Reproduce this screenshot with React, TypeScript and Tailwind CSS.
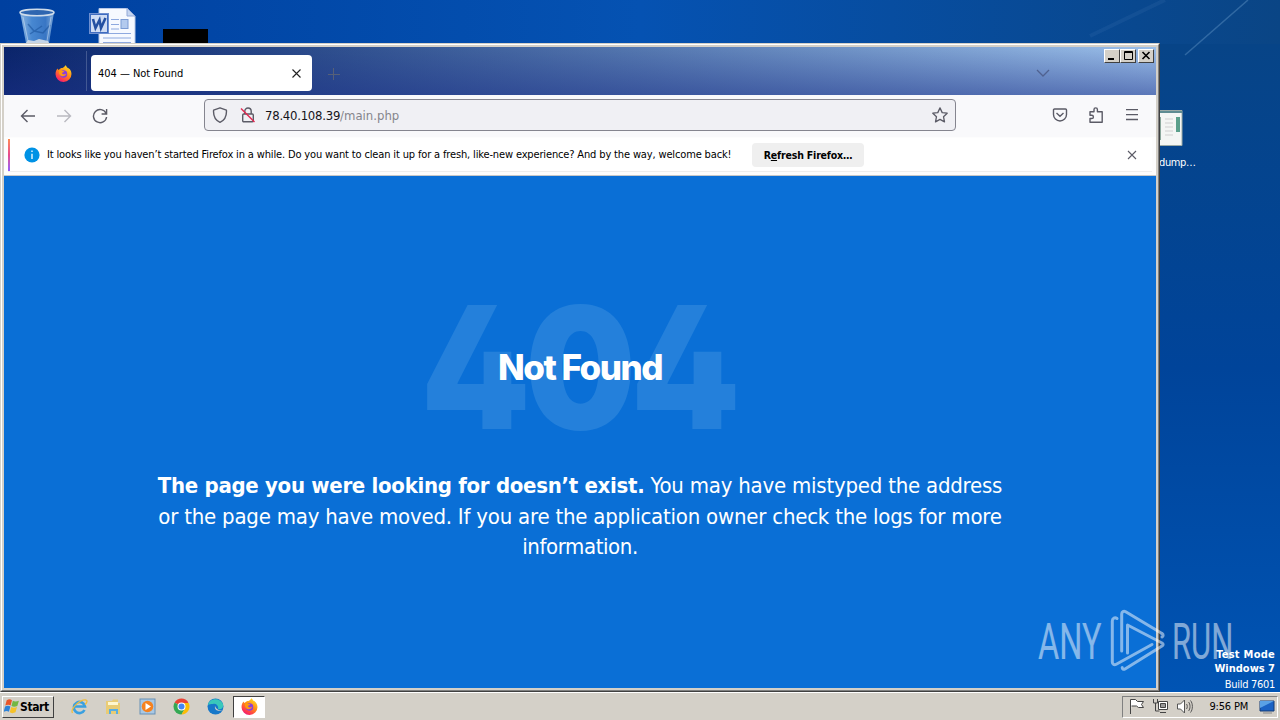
import React from "react";

const Firefox: React.FC<{ size: number; id: string }> = ({ size, id }) => (
  <svg width={size} height={size} viewBox="0 0 16 16">
    <defs>
      <linearGradient id={id} x1="0.8" y1="0" x2="0.2" y2="1">
        <stop offset="0" stopColor="#ffe226" />
        <stop offset="0.45" stopColor="#ff8a16" />
        <stop offset="0.8" stopColor="#ff3750" />
        <stop offset="1" stopColor="#e31587" />
      </linearGradient>
    </defs>
    <path
      d="M9.7 0.3c1 .7 1.500 1.600 1.900 2.400 1-.1 3.900 2 3.900 5.800a7.500 7.300 0 0 1-15 .2c0-2.500.8-4.200 2-5.300l.5 1.200 1.200-.6C5.300 3 6 2.800 7 2.900c1.200-.6 2.300-1.400 2.700-2.600z"
      fill={`url(#${id})`}
    />
    <circle cx="8" cy="8.500" r="3.500" fill="#8a3ce0" />
    <path d="M3.800 5.200c1.200-.8 2.300-.5 3.400.4l1.600.3c-.2 1-1.300 1-2.100 1.500-.3 1.500 2.600 2.300 4 .4-.4 3-4.400 3.800-6.100 1.600-1-1.300-1.100-2.700-.8-4.200z" fill="#ff980e" />
  </svg>
);

const RecycleBin: React.FC = () => (
  <svg width="36" height="36" viewBox="0 0 36 36">
    <defs>
      <linearGradient id="bin" x1="0" x2="1">
        <stop offset="0" stopColor="#9dc3e8" />
        <stop offset="0.35" stopColor="#4f8fd6" />
        <stop offset="0.75" stopColor="#3f7cc8" />
        <stop offset="1" stopColor="#8fb6e0" />
      </linearGradient>
    </defs>
    <path d="M1 4L7 35h23l5-31z" fill="url(#bin)" opacity="0.9" />
    <ellipse cx="18" cy="4.500" rx="17" ry="3.200" fill="#2f66b0" stroke="#cfdcea" strokeWidth="1.500" />
    <path d="M7 35l2-3 6 1 5-2 9 2 1 2z" fill="#d3dde8" opacity="0.9" />
    <path d="M9 16l6 7 9 2 7-8M11 26l12-8" stroke="#1d559f" strokeWidth="1.500" fill="none" opacity="0.6" />
    <path d="M4 9l5 24M32 9l-4 24" stroke="#dbe9f7" opacity="0.5" />
  </svg>
);

const WordFile: React.FC = () => (
  <svg width="48" height="36" viewBox="0 0 48 36">
    <path d="M10 .5h28l8 8V36H10z" fill="#f6f9ff" stroke="#b9c8e6" />
    <path d="M38 0v8h8z" fill="#c5d5f0" stroke="#93a9d8" />
    <path d="M22 11.500h8M22 16.500h8M22 21h8M14 25.500h28M14 30h28M14 34.500h28" stroke="#8ea9df" />
    <rect x="32" y="11.500" width="7" height="9" fill="#b3caee" stroke="#7b9bd4" />
    <rect x="0.500" y="5.500" width="19" height="20" fill="#3f6cc0" stroke="#6e8fd0" />
    <rect x="2" y="7" width="16" height="17" fill="#cfdcf4" />
    <path d="M4 11l2.500 9 4-8 1.500 8 4.500-10" fill="none" stroke="#2450a2" strokeWidth="2.600" />
  </svg>
);

const winButton =
  "flex items-center justify-center w-4 h-[14px] bg-[#d4d0c8] border border-t-white border-l-white border-r-[#404040] border-b-[#404040]";

const TitleBar: React.FC = () => (
  <div className="relative flex h-12 shrink-0 bg-gradient-to-r from-[#0a246a] to-[#9cc0ea]">
    <div className="absolute inset-0 bg-gradient-to-b from-transparent to-[#1c3088]/50" />
    <div className="relative flex w-full">
      <div className="flex w-[83px] items-center justify-end border-r border-[#6075a5]/60 pr-3.5 my-1 pt-1">
        <Firefox size={17} id="ffTitle" />
      </div>
      <div className="ml-1 mt-2 flex h-9 w-[221px] items-center justify-between rounded bg-white pl-[7px] pr-2.5 text-[11px] text-black">
        <span className="pt-[3px] tracking-[-0.03px] whitespace-nowrap">404 — Not Found</span>
        <svg width="11" height="11" viewBox="0 0 11 11" stroke="#222" strokeWidth="1.100">
          <path d="M1.500 1.500l8 8M9.500 1.500l-8 8" />
        </svg>
      </div>
      <svg className="ml-4 mt-[21px]" width="12" height="12" stroke="#566078" strokeWidth="1">
        <path d="M5.500 0v12M0 6.500h12" />
      </svg>
      <svg className="ml-auto mt-[22px] mr-[54px]" width="14" height="8" fill="none" stroke="#506290" strokeWidth="1.300">
        <path d="M1 1l6 6 6-6" />
      </svg>
      <div className="mt-0.5 mr-0.5 flex">
        <span className={winButton}>
          <svg width="12" height="10"><path d="M2 8h6" stroke="#000" strokeWidth="2" /></svg>
        </span>
        <span className={winButton}>
          <svg width="12" height="10"><path d="M2.500 .5h8v8h-8zM2 1.500h8" stroke="#000" fill="none" /></svg>
        </span>
        <span className={`${winButton} ml-0.5`}>
          <svg width="12" height="10"><path d="M2.500 1l7 7M9.500 1l-7 7" stroke="#000" strokeWidth="1.600" /></svg>
        </span>
      </div>
    </div>
  </div>
);

const Toolbar: React.FC = () => (
  <div className="flex h-[42px] shrink-0 items-start bg-[#f9f9fb] pt-1">
    <div className="flex h-8 items-center gap-5 pl-4 pt-px text-[#5b5b66]">
      <svg width="16" height="16" fill="none" stroke="#5b5b66" strokeWidth="1.400">
        <path d="M15 8H1.500M7.500 2L1.500 8l6 6" />
      </svg>
      <svg width="16" height="16" fill="none" stroke="#b9b9c0" strokeWidth="1.400">
        <path d="M1 8h13.500M8.500 2l6 6-6 6" />
      </svg>
      <svg width="16" height="16" fill="none" stroke="#5b5b66" strokeWidth="1.400">
        <path d="M14 5.200A6.600 6.600 0 1 0 14.600 9M14.600 1v5H9.600" />
      </svg>
    </div>
    <div className="ml-24 flex h-8 w-[752px] items-center rounded-[4px] border border-[#85858f] bg-[#f0f0f4] pl-[7px] pr-[7px]">
      <svg width="16" height="16" fill="none" stroke="#5b5b66" strokeWidth="1.400">
        <path d="M8 .8l6.400 2.400C14.800 8.500 13 13 8 15.300 3 13 1.200 8.500 1.600 3.200z" strokeLinejoin="round" />
      </svg>
      <svg className="ml-3" width="16" height="16" fill="none" stroke="#5b5b66" strokeWidth="1.400">
        <rect x="2.700" y="7" width="10.600" height="7.800" rx="1" />
        <path d="M4.800 7V4.200a3.200 3.200 0 0 1 6.400 0V7" />
        <path d="M1 1.500l13.500 13.500" stroke="#e22850" />
      </svg>
      <span className="ml-[9px] pt-px whitespace-nowrap text-[13px] tracking-[-0.25px] text-[#15141a]">
        78.40.108.39<span className="tracking-normal text-[#85858c]">/main.php</span>
      </span>
      <svg className="ml-auto" width="16" height="16" fill="none" stroke="#5b5b66" strokeWidth="1.300" strokeLinejoin="round">
        <path d="M8 .9l2.200 4.700 5 .6-3.700 3.500 1 5.200L8 12.400l-4.500 2.500 1-5.200L.8 6.200l5-.6z" />
      </svg>
    </div>
    <div className="ml-24 flex h-8 items-center gap-5">
      <svg width="16" height="16" fill="none" stroke="#5b5b66" strokeWidth="1.400">
        <path d="M2.500 2h11c.6 0 1 .4 1 1v4.500a6.500 6.500 0 0 1-13 0V3c0-.6.400-1 1-1zM4.500 6L8 9.300 11.500 6" />
      </svg>
      <svg width="16" height="16" fill="none" stroke="#5b5b66" strokeWidth="1.400">
        <path d="M2 15.200V11.500h1.800a1.500 1.500 0 0 0 0-3.200H2V4.700h4V2.600a1.700 1.700 0 0 1 3.400 0v2.100h4.800v10.500z" strokeLinejoin="round" />
      </svg>
      <svg width="16" height="16" stroke="#5b5b66" strokeWidth="1.300">
        <path d="M2 2.700h12M2 7.700h12M2 12.500h12" />
      </svg>
    </div>
  </div>
);

const Notice: React.FC = () => (
  <div className="h-[39px] shrink-0 border-b border-[#c8c8c8] bg-[#fdfdfd] px-1 pt-px">
    <div className="flex h-[34px] items-center border-b border-[#ededed] bg-white">
      <div className="h-8 w-0.5 bg-gradient-to-b from-[#ff8a50] via-[#e8488a] to-[#9059ff]" />
      <svg className="ml-3.5" width="16" height="16">
        <circle cx="8" cy="8" r="7.600" fill="#0092e5" />
        <path d="M8 3.500v1.600M8 6.800v5.200" stroke="#fff" strokeWidth="1.300" />
      </svg>
      <span className="ml-[7px] pt-0.5 whitespace-nowrap text-[11px] tracking-[-0.146px] text-black">
        It looks like you haven’t started Firefox in a while. Do you want to clean it up for a fresh, like-new experience? And by the way, welcome back!
      </span>
      <button className="ml-auto mr-[263px] h-6 w-28 whitespace-nowrap rounded-sm bg-[#efefef] pt-0.5 text-[10.500px] font-bold tracking-[-0.18px] text-black">
        R<u>e</u>fresh Firefox…
      </button>
      <svg className="mr-[15px]" width="10" height="10" stroke="#5b5b66" strokeWidth="1.100">
        <path d="M1 1l8 8M9 1L1 9" />
      </svg>
    </div>
  </div>
);

const ErrorPage: React.FC = () => (
  <div className="flex flex-1 flex-col items-center bg-[#0a6fd6] pt-[106px] text-white">
    <div className="grid h-[170px] place-items-center">
      <span className="col-start-1 row-start-1 -translate-x-0.5 scale-x-[0.92] font-['Inter'] text-[170px] font-black leading-none tracking-[-6px] text-[#2480db] [font-feature-settings:'cv02']">
        404
      </span>
      <h1 className="relative z-10 col-start-1 row-start-1 font-['Inter'] text-[35px] font-extrabold tracking-[-1.500px]">Not Found</h1>
    </div>
    <p className="mt-[19px] whitespace-nowrap text-center text-[22px] leading-[30.500px] tracking-[-0.22px]">
      <b className="tracking-[-0.3px]">The page you were looking for doesn’t exist.</b> You may have mistyped the address
      <br />
      or the page may have moved. If you are the application owner check the logs for more
      <br />
      <span className="tracking-[-0.4px]">information.</span>
    </p>
  </div>
);

const Watermark: React.FC = () => (
  <div className="absolute left-[1038px] top-[608px] flex h-16 w-[196px] items-center font-['Roboto'] text-[50px] text-white opacity-50">
    <span className="w-[66px] origin-left scale-x-[0.65] pt-1">ANY</span>
    <svg className="mx-1.5 shrink-0" width="56" height="64" fill="none" stroke="#fff" strokeWidth="3" strokeLinejoin="round" strokeLinecap="round">
      <path d="M7 10.500C5 9 2.300 10 2.300 13v41c0 2.500 2 3.300 4 2.200L42 36.500" />
      <path d="M11.700 43V6c0-2.500 2-3.300 4-2.200L52 25.500" />
      <path d="M17.500 45V17L52 35c1.500 1 1.500 2 0 3L15 61c-1.500.8-2.800 0-2.800-1.500" />
      <path d="M52 25.500c1.500 1 1.500 2.500 0 3.500" />
    </svg>
    <span className="w-[62px] origin-left scale-x-[0.62] pt-1">RUN</span>
  </div>
);

const Taskbar: React.FC = () => (
  <div className="flex h-7 shrink-0 items-center border-t border-white bg-[#d4d0c8] pl-0.5 text-[11px] text-black">
    <div className="flex h-[22px] w-[52px] items-center border border-t-white border-l-white border-r-[#404040] border-b-[#404040] pl-px font-bold">
      <svg width="16" height="17" viewBox="0 0 15 16">
        <path d="M2.500 2c2-1.200 3.500-1 5 0L6.200 7c-1.500-1-3-1-5 0z" fill="#e8562a" />
        <path d="M8.300 2.500c1.500 1 3.500 1 5.700 0l-1.500 5c-2 1-4 1-5.500 0z" fill="#74b743" />
        <path d="M1 8c2-1 3.500-1 5 0l-1.400 5c-1.500-1-3-1-5 0z" fill="#2c82d8" />
        <path d="M6.800 8.500c1.500 1 3.500 1 5.400 0l-1.400 5c-2 1-4 1-5.400 0z" fill="#f6c229" />
      </svg>
      <span className="text-[12px] tracking-[-0.4px]">Start</span>
    </div>
    <div className="ml-[17px] flex items-center gap-[17px]">
      <svg width="17" height="17" fill="none">
        <path d="M13.500 12A5.600 5.600 0 1 1 14 8.500H4" stroke="#3aa0e0" strokeWidth="2.600" />
        <path d="M1.500 15C-1 11 9 1 15 2c2 .6.500 3-1 4.500" stroke="#f1bd3c" strokeWidth="1.300" />
      </svg>
      <svg width="17" height="17">
        <path d="M1 3h6l1-1.500h5V5h2v11H1z" fill="#e9cc75" />
        <path d="M3 4h10v3H3z" fill="#fff7cf" />
        <path d="M4 16v-5h9v5h-2v-3H6v3z" fill="#59aee2" />
      </svg>
      <svg width="17" height="17">
        <rect x="1" y="1" width="15" height="15" fill="#a9c8e4" stroke="#6991b6" />
        <circle cx="8.500" cy="8.500" r="5.800" fill="#f58220" />
        <path d="M6.500 5l5.500 3.500L6.500 12z" fill="#fff" />
      </svg>
      <svg width="17" height="17">
        <path d="M8.500 8.500L1.600 4.500A8 8 0 0 1 15.400 4.500z" fill="#ea4335" />
        <path d="M8.500 8.500L1.600 4.500A8 8 0 0 0 8.500 16.500l3-5z" fill="#34a853" />
        <path d="M8.500 5h7.200A8 8 0 0 1 8.500 16.500l3.500-6z" fill="#fbbc05" />
        <circle cx="8.500" cy="8.500" r="4" fill="#fff" />
        <circle cx="8.500" cy="8.500" r="3" fill="#4285f4" />
      </svg>
      <svg width="17" height="17">
        <circle cx="8.500" cy="8.500" r="8" fill="#1778c9" />
        <path d="M1 7C2 0 13-1 16 6c1 4-2 6-5 5 1-3-2-6-5-5-2 0-4 0-5 1z" fill="#3ac8bb" />
        <path d="M8 8c1 3 4 5 7 4l1-.5c-2 2-9 2-8-3.500z" fill="#d4d0c8" />
      </svg>
    </div>
    <div className="ml-[9px] flex h-[22px] w-8 items-center justify-center border border-t-[#404040] border-l-[#404040] border-r-white border-b-white bg-white">
      <Firefox size={17} id="ffTask" />
    </div>
    <div className="ml-auto mr-0.5 flex h-[22px] items-center border border-t-[#808080] border-l-[#808080] border-r-white border-b-white pl-[5px] pr-0.5">
      <svg width="17" height="17" fill="#fff" stroke="#444">
        <path d="M2.500 16V1.500h5l2 2h6l-2 3 2 3h-5l-2-1.500h-5" />
      </svg>
      <svg className="ml-[7px]" width="17" height="17" fill="#fff" stroke="#444">
        <path d="M6.500 3.500h9v8h-9zM8 14.500h6" />
        <path d="M8.500 5.500h5v4h-5z" fill="#999" />
        <path d="M1.500 1v4h4V1M3.500 5v8h4" fill="none" />
      </svg>
      <svg className="ml-[7px]" width="17" height="17" fill="none" stroke="#555">
        <path d="M1.500 6v5h3l4 4V2l-4 4z" fill="#fff" />
        <path d="M10.500 6c1 1 1 4 0 5M12.500 4c2 2 2 7 0 9M14.500 2.500c2.500 3 2.500 9 0 12" />
      </svg>
      <span className="ml-[17px] pt-0.5 tracking-[-0.2px]">9:56 PM</span>
      <svg className="ml-[11px]" width="16" height="14">
        <path d="M1 1h14v10H1z" fill="#1b62c4" stroke="#153b75" />
        <path d="M1 1h14L1 8z" fill="#5aa1e6" />
        <path d="M4 13h9" stroke="#888" />
      </svg>
    </div>
  </div>
);

const App: React.FC = () => (
  <div className="relative flex h-[720px] w-[1280px] flex-col overflow-hidden font-['DejaVu_Sans_Condensed','DejaVu_Sans',sans-serif]">
    <div className="relative flex-1 bg-gradient-to-r from-[#0040a0] via-[#0552b2] to-[#0a4585]">
      <div className="absolute right-0 top-11 bottom-0 w-[124px] bg-gradient-to-b from-[#074487] via-[#00449a] to-[#0054b4]" />
      <svg className="absolute right-0 top-0" width="320" height="140" stroke="#8ab8e0" fill="none">
        <path d="M288 0L225 55" opacity="0.3" strokeWidth="1.500" />
        <path d="M205 0L130 36" opacity="0.08" strokeWidth="4" />
      </svg>
      <div className="absolute left-[19px] top-2"><RecycleBin /></div>
      <div className="absolute left-[89px] top-2"><WordFile /></div>
      <div className="absolute left-[163px] top-[29px] h-[15px] w-[45px] bg-black" />
      <svg className="absolute left-[1149px] top-[110px]" width="34" height="36">
        <path d="M0 .5h33v35H0z" fill="#f4f6f4" stroke="#9caaa6" />
        <path d="M0 2h33" stroke="#5e8c92" strokeWidth="2" />
        <path d="M11 7v23" stroke="#89a79b" strokeWidth="2" />
        <path d="M16 9h8M16 13h8M16 17h8M16 21h8M16 25h8" stroke="#d0d0d0" />
        <path d="M29 7v15" stroke="#5ba08b" strokeWidth="4" />
      </svg>
      <span className="absolute left-[1159px] top-[156px] text-[11px] leading-[14px] tracking-[-0.4px] text-white">dump…</span>
      <div className="absolute left-0 top-[43px] h-[649px] w-[1160px] border border-t-[#d4d0c8] border-l-[#d4d0c8] border-r-[#404040] border-b-[#404040]">
        <div className="h-full border border-t-white border-l-white border-r-[#808080] border-b-[#808080]">
          <div className="flex h-full flex-col border-2 border-[#d4d0c8]">
            <TitleBar />
            <Toolbar />
            <Notice />
            <ErrorPage />
          </div>
        </div>
      </div>
      <Watermark />
      <div className="absolute -bottom-0.5 right-[5px] text-right text-[11px] text-white">
        <div className="font-bold leading-[14px] tracking-[0.25px]">Test Mode</div>
        <div className="font-bold leading-[14px]">Windows 7</div>
        <div className="leading-[18px] tracking-[-0.3px]">Build 7601</div>
      </div>
    </div>
    <Taskbar />
  </div>
);

export default App;
